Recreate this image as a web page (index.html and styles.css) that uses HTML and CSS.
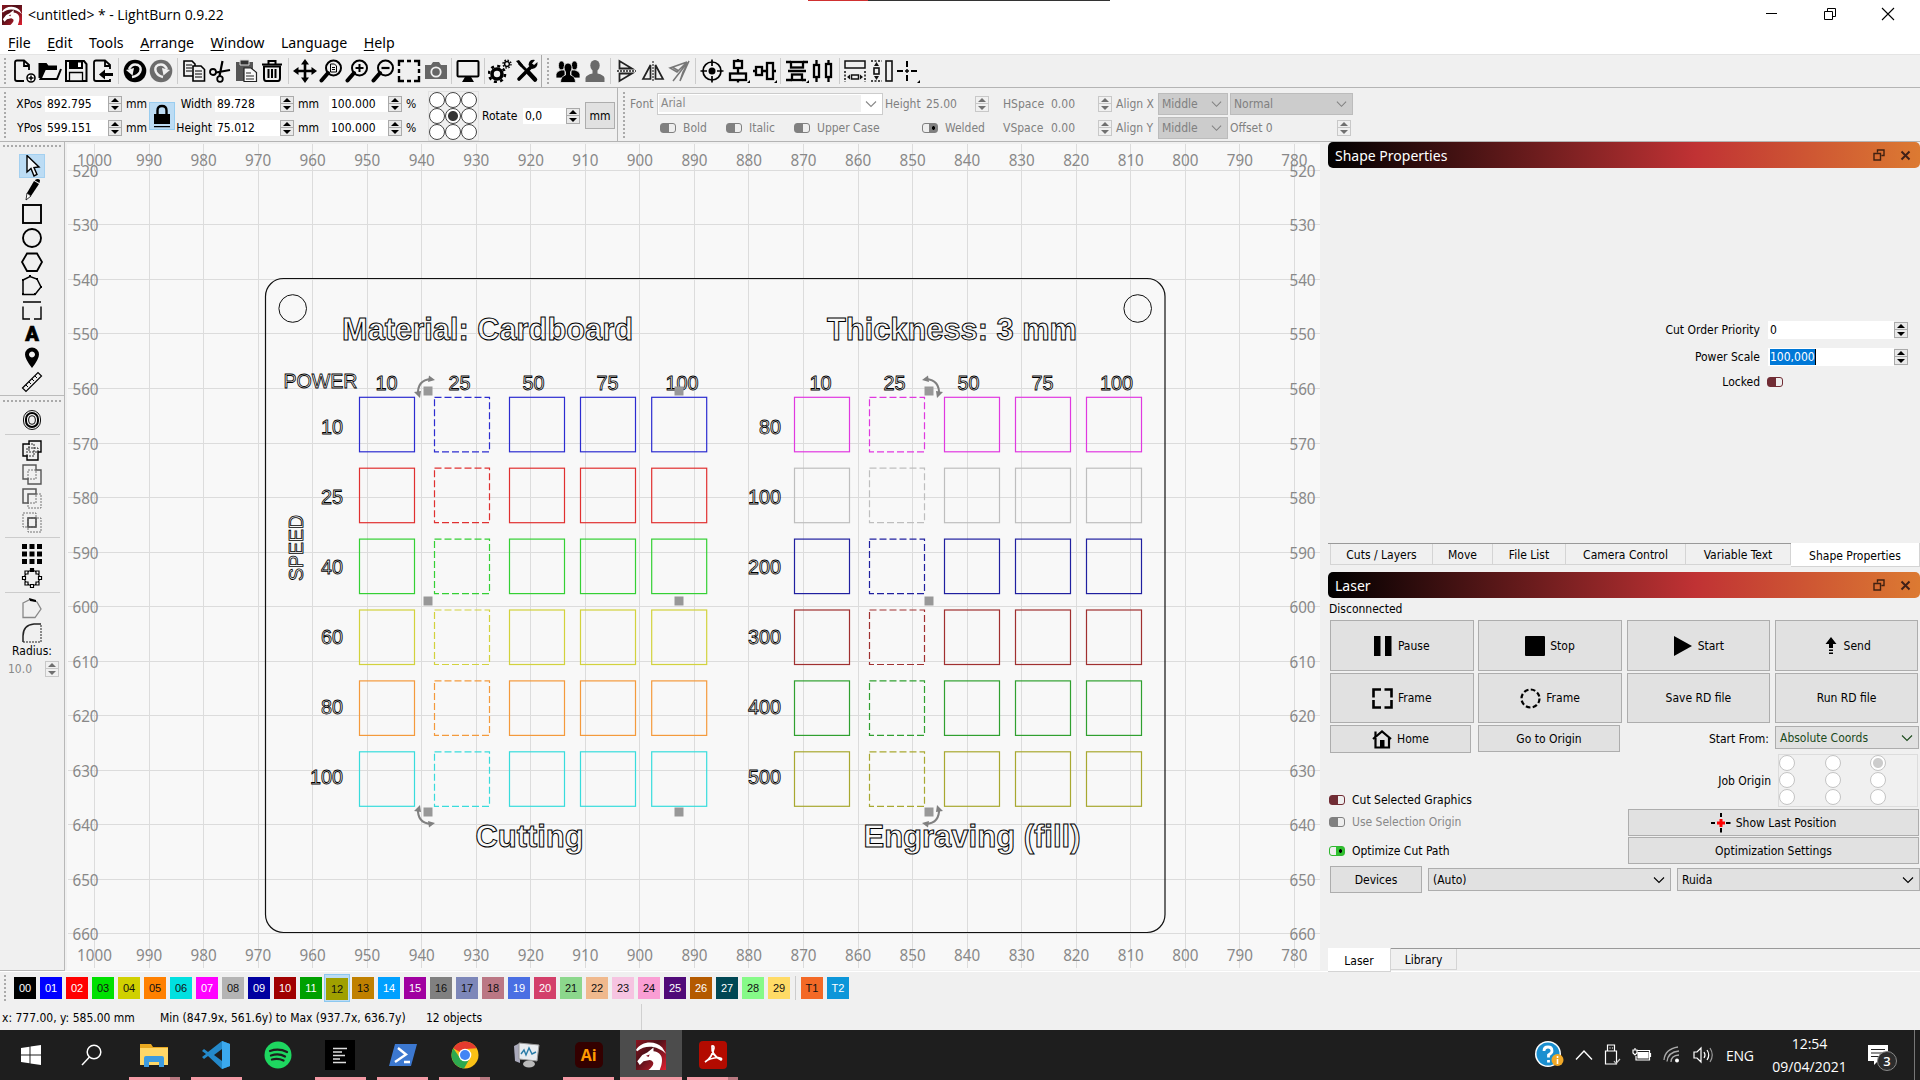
FILE: index.html
```html
<!DOCTYPE html>
<html lang="en">
<head>
<meta charset="utf-8">
<title>LightBurn 0.9.22</title>
<link rel="stylesheet" href="styles.css">
</head>
<body>
<svg class="defs" width="0" height="0">
  <defs>
    <linearGradient id="dragonbg" x1="0" y1="0" x2="1" y2="1"><stop offset="0" stop-color="#8a1420"/><stop offset=".4" stop-color="#4d1018"/><stop offset="1" stop-color="#e02030"/></linearGradient>
    <symbol id="dragon" viewBox="0 0 24 24"><rect width="24" height="24" fill="url(#dragonbg)"/><path d="M0 8C4 1 15 0 21 6L24 11C18 5 8 3 1 9Z" fill="#fff"/><path d="M1 17L5 12L9 10L14 6L14 9C22 10 22 17 19 24H10C15 20 15 17 11 16L6 17L3 20Z" fill="#fff"/><path d="M8 12.500l3-1-1 2z" fill="#801020"/></symbol>
    <symbol id="lens" viewBox="0 0 24 24"><circle cx="14.500" cy="9" r="7.500" fill="none" stroke="#000" stroke-width="2"/><path d="M9 14L2.500 21.500" stroke="#000" stroke-width="4" stroke-linecap="round"/></symbol>
    <symbol id="chev" viewBox="0 0 12 8"><path d="M1 1.500L6 6.500L11 1.500" fill="none" stroke="currentColor" stroke-width="1.100"/></symbol>
  </defs>
</svg>

<header class="titlebar">
  <svg class="applogo" width="20" height="20"><use href="#dragon"/></svg>
  <span class="apptitle">&lt;untitled&gt; * - LightBurn 0.9.22</span>
  <div class="winbuttons">
    <svg width="14" height="14"><path d="M1 6.500H12" stroke="#000"/></svg>
    <svg width="14" height="14"><path d="M1.500 4.500H9.500V12.500H1.500ZM4.500 4V1.500H12.500V9.500H10" fill="none" stroke="#000"/></svg>
    <svg width="14" height="14"><path d="M1 1L13 13M13 1L1 13" stroke="#000" stroke-width="1.100"/></svg>
  </div>
  <div class="topstrip"></div>
</header>

<nav class="menubar">
  <span><u>F</u>ile</span><span><u>E</u>dit</span><span>Tools</span><span><u>A</u>rrange</span><span><u>W</u>indow</span><span>Language</span><span><u>H</u>elp</span>
</nav>

<section class="iconbar">
  <i class="grip"></i>
  <div class="icons main-icons">
    <svg viewBox="0 0 24 24"><path d="M17 11V6L12 1.500H5Q3 1.500 3 3.500V20Q3 22 5 22H12M12 2V7H17" fill="none" stroke="#000" stroke-width="1.800"/><circle cx="19" cy="19" r="4" fill="#fff" stroke="#000" stroke-width="1.600"/><path d="M16.500 19h5M19 16.500v5" stroke="#000" stroke-width="1.500"/></svg>
    <svg viewBox="0 0 24 24"><path d="M1.500 19V5H8L10 7.500H18V10H7L2.500 20H19L23 10" fill="none" stroke="#000" stroke-width="2"/><path d="M2 20L2 5H8L10 7H18V10H7Z"/></svg>
    <svg viewBox="0 0 24 24"><path d="M2 2H20L22.500 5V22H2Z" fill="none" stroke="#000" stroke-width="2"/><path d="M5 2H19V10H5Z"/><path d="M14 3.500h3v4.500h-3z" fill="#fff"/><path d="M5.500 13.500H18.500V22H5.500Z" fill="#f0f0f0" stroke="#000" stroke-width="1.300"/></svg>
    <svg viewBox="0 0 24 24"><path d="M19 10V6L14 1.500H5Q3 1.500 3 3.500V20Q3 22 5 22H19V20M14 2V7H19" fill="none" stroke="#000" stroke-width="1.800"/><path d="M8 15.500L14 10.500V14H22V17H14V20.500Z"/></svg>
    <i class="sep"></i>
    <svg viewBox="0 0 24 24"><circle cx="12" cy="12" r="11.300"/><path d="M6 10Q9 4 15 6Q19 8 17 13Q15 17 9 18" fill="none" stroke="#f0f0f0" stroke-width="2.400"/><path d="M3 11L11 9L9.500 16.500Z" fill="#f0f0f0"/></svg>
    <svg viewBox="0 0 24 24"><circle cx="12" cy="12" r="11.300" fill="#6c6c6c"/><path d="M18 10Q15 4 9 6Q5 8 7 13Q9 17 14 18" fill="none" stroke="#f0f0f0" stroke-width="2.400"/><path d="M21 11L13 9L14.500 16.500Z" fill="#f0f0f0"/></svg>
    <i class="sep"></i>
    <svg viewBox="0 0 24 24"><path d="M2 2H10L13 5V17H2Z" fill="#f0f0f0" stroke="#000" stroke-width="1.600"/><path d="M4 6h6M4 9h6M4 12h6"  stroke="#000"/><path d="M11 7H19L22.500 10.500V22H11Z" fill="#f0f0f0" stroke="#000" stroke-width="1.600"/><path d="M13 12h7M13 15h7M13 18h7" stroke="#000" stroke-width="1.200"/></svg>
    <svg viewBox="0 0 24 24" fill="none" stroke="#000"><circle cx="5" cy="13" r="3" stroke-width="1.800"/><circle cx="12" cy="20" r="2.800" stroke-width="1.800"/><path d="M8 13.500L22 11M11.500 17L14.500 2" stroke-width="2.200"/></svg>
    <svg viewBox="0 0 24 24"><path d="M2 3H19V10H11V22H2Z" fill="#555"/><path d="M6 1h9v5h-9z" fill="#333" stroke="#ddd"/><path d="M10 9H17L22.500 13.500V22.500H10Z" fill="#f8f8f8" stroke="#222" stroke-width="1.200"/><path d="M12 14h5M12 17h8M12 20h8" stroke="#222"/></svg>
    <svg viewBox="0 0 24 24" fill="none" stroke="#000"><path d="M4 7.500H20V19Q20 22 18 22H6Q4 22 4 19Z" stroke-width="2"/><path d="M2 5.500H22M8.500 4.500V2H15.500V4.500" stroke-width="2"/><path d="M8.500 10v9M12 10v9M15.500 10v9" stroke-width="2"/></svg>
    <i class="sep"></i>
    <svg viewBox="0 0 24 24"><path d="M12 4V20M4 12H20" stroke="#000" stroke-width="2.600"/><path d="M12 0L16 5.500H8ZM12 24L8 18.500H16ZM0 12L5.500 8V16ZM24 12L18.500 16V8Z"/></svg>
    <svg viewBox="0 0 24 24"><use href="#lens"/><path d="M11.500 5H15.500L17.500 7V13H11.500Z" fill="none" stroke="#000"/><path d="M13 8.500h3M13 10.500h3" stroke="#000"/></svg>
    <svg viewBox="0 0 24 24"><use href="#lens"/><path d="M10.500 9h8M14.500 5v8" stroke="#000" stroke-width="2"/></svg>
    <svg viewBox="0 0 24 24"><use href="#lens"/><path d="M10.500 9h8" stroke="#000" stroke-width="2.200"/></svg>
    <svg viewBox="0 0 24 24"><path d="M2 7V2H7M10 2H14M17 2H22V7M22 10V14M22 17V22H17M14 22H10M7 22H2V17M2 14V10" fill="none" stroke="#000" stroke-width="2.400"/></svg>
    <svg viewBox="0 0 24 24"><path d="M1 6H7L9 3H15L17 6H23V20H1Z" fill="#666"/><circle cx="12" cy="13" r="4.700" fill="none" stroke="#f0f0f0" stroke-width="1.800"/></svg>
    <i class="sep"></i>
    <svg viewBox="0 0 24 24"><rect x="1.500" y="2" width="21" height="15.500" rx="1" fill="none" stroke="#000" stroke-width="2"/><path d="M9 18H15L18 23H6Z"/></svg>
    <i class="sep"></i>
    <svg viewBox="0 0 24 24" fill="none" stroke="#000"><circle cx="9" cy="15" r="5" stroke-width="3.600"/><circle cx="9" cy="15" r="8" stroke-width="2.600" stroke-dasharray="3 3.280"/><circle cx="19" cy="5" r="2.400" stroke-width="1.500"/><circle cx="19" cy="5" r="4" stroke-width="1.300" stroke-dasharray="1.600 1.540"/></svg>
    <svg viewBox="0 0 24 24"><path d="M4 4L20 20" stroke="#000" stroke-width="2.800"/><path d="M13.500 13.500L20 20.500" stroke="#000" stroke-width="4.500" stroke-linecap="round"/><path d="M17 7L4 20" stroke="#000" stroke-width="3.600" stroke-linecap="round"/><path d="M22.500 3L19 6L17 4.500L20 1Q14 0 13.500 6L17 10Q23 9 22.500 3ZM1 2L4 1L8 6L6 8Z"/></svg>
  </div>
  <i class="barend"></i>
  <i class="grip"></i>
  <div class="icons arrange-icons">
    <svg viewBox="0 0 24 24"><g fill="#000" stroke="#f0f0f0" stroke-width=".8"><ellipse cx="5.500" cy="6.500" rx="3" ry="4.500"/><ellipse cx="18.500" cy="6.500" rx="3" ry="4.500"/><path d="M0 19V15Q1 12 5 11H9V19ZM24 19V15Q23 12 19 11H15V19Z"/><path d="M4.500 23.500Q4.500 17.500 9.500 16V13Q8 11 8 8Q8.500 4 12 4T16 8Q16 11 14.500 13V16Q19.500 17.500 19.500 23.500Z"/></g></svg>
    <svg viewBox="0 0 24 24"><ellipse cx="12" cy="6.500" rx="4.700" ry="5.500" fill="#6a6a6a"/><path d="M2.500 23V19Q3 16 9.500 14.500V11h5V14.500Q21 16 21.500 19V23Z" fill="#6a6a6a"/></svg>
    <i class="sep"></i>
    <svg viewBox="0 0 24 24" fill="none" stroke="#222" stroke-width="1.800"><path d="M4.500 2V9.500H17ZM4.500 22V14.500H17Z"/><path d="M2 12H21" stroke-dasharray="2 1" stroke-width="1.500"/></svg>
    <svg viewBox="0 0 24 24" fill="none" stroke="#222" stroke-width="1.700"><path d="M2 20H9.500V6ZM22 20H14.500V6Z"/><path d="M12 2V22" stroke-dasharray="2 1" stroke="#666"/></svg>
    <svg viewBox="0 0 24 24" fill="none" stroke="#777" stroke-width="1.500"><path d="M2 9L19 3L9 13ZM12 22L21 2L15 13ZM5 22L19 4M5 8.500l5 3"/></svg>
    <i class="sep"></i>
    <svg viewBox="0 0 24 24" fill="none" stroke="#000" stroke-width="1.700"><circle cx="12" cy="12" r="9"/><path d="M12 .5V7M12 17V23.500M.5 12H7M17 12H23.500"/><circle cx="12" cy="12" r="3.500" fill="#000" stroke="none"/></svg>
    <svg viewBox="0 0 24 24" fill="none" stroke="#000" stroke-width="2.300"><rect x="8" y="2" width="8" height="7"/><rect x="4" y="14.500" width="16" height="6.500"/><path d="M12 8V15M12 21v2.500M12 0v2"/><path d="M24 24h-3l3-3z" fill="#000" stroke="none"/></svg>
    <svg viewBox="0 0 24 24" fill="none" stroke="#000" stroke-width="2.300"><rect x="3" y="8" width="6" height="8"/><rect x="14" y="4" width="6" height="16"/><path d="M9 12H14M20 12h3M0 12h3"/><path d="M24 24h-3l3-3z" fill="#000" stroke="none"/></svg>
    <i class="sep"></i>
    <svg viewBox="0 0 24 24" fill="none" stroke="#000" stroke-width="2.300"><rect x="6" y="3" width="12" height="5.500"/><rect x="7" y="15.500" width="10" height="5.500"/><path d="M1 3H6M18 3h5M3 12H21M1 21H7M17 21H21"/><path d="M24 24h-3l3-3z" fill="#000" stroke="none"/></svg>
    <svg viewBox="0 0 24 24" fill="none" stroke="#000" stroke-width="2.300"><rect x="3" y="6" width="5" height="12"/><rect x="15" y="5" width="5" height="13"/><path d="M5.500 1V6M5.500 18V23M17.500 1v4M17.500 18v5"/></svg>
    <i class="sep"></i>
    <svg viewBox="0 0 24 24" fill="none" stroke="#111" stroke-width="1.500"><rect x="2" y="2" width="20" height="7"/><path d="M2 12V23M22 12V23" stroke-dasharray="2 1.500"/><rect x="8.500" y="16" width="7" height="4"/><path d="M4 18L7 15.500V20.500ZM20 18L17 15.500V20.500Z" fill="#111" stroke="none"/></svg>
    <svg viewBox="0 0 24 24" fill="none" stroke="#111" stroke-width="1.600"><rect x="16" y="2" width="6" height="20"/><path d="M1 2H12M1 22H12" stroke-dasharray="2 1.500"/><rect x="4" y="9" width="5" height="6"/><path d="M6.500 3L9 7H4ZM6.500 21L9 17H4Z" fill="#111" stroke="none"/></svg>
    <svg viewBox="0 0 24 24" fill="none" stroke="#000" stroke-width="2"><path d="M11 2V8M11 16V22M1 12H7M15 12H21"/><path d="M11 10v4M9 12h4" stroke-width="1.400"/><path d="M24 24h-3l3-3z" fill="#000" stroke="none"/></svg>
  </div>
</section>

<section class="propbar">
  <div class="xform">
    <i class="grip tall"></i>
    <div class="xy">
      <label>XPos</label><b class="field">892.795</b><i class="spin"></i><span>mm</span>
      <label>YPos</label><b class="field">599.151</b><i class="spin"></i><span>mm</span>
    </div>
    <div class="lock"><svg width="18" height="24"><path d="M4.500 10V6.500Q4.500 2 9 2T13.500 6.500V10" fill="none" stroke="#000" stroke-width="2.400"/><path d="M1 10H17V20H1ZM1 22h16v1.200H1Z"/></svg></div>
    <div class="wh">
      <label>Width</label><b class="field">89.728</b><i class="spin"></i><span>mm</span><b class="field">100.000</b><i class="spin"></i><span>%</span>
      <label>Height</label><b class="field">75.012</b><i class="spin"></i><span>mm</span><b class="field">100.000</b><i class="spin"></i><span>%</span>
    </div>
    <div class="anchors"><i></i><i></i><i></i><i></i><i class="on"></i><i></i><i></i><i></i><i></i></div>
    <label class="rotlabel">Rotate</label><b class="field rotfield">0,0</b><i class="spin"></i>
    <div class="unit">mm</div>
  </div>
  <div class="fontbar">
    <i class="grip tall"></i>
    <div class="fontcols">
      <div class="frow top">
        <span>Font</span><div class="fontbox"><em>Arial</em><svg width="12" height="8"><use href="#chev"/></svg></div>
        <span>Height</span><span>25.00</span><i class="spin"></i><span>HSpace</span><span>0.00</span><i class="spin"></i><span>Align X</span>
        <div class="gcombo">Middle<svg width="11" height="8"><use href="#chev"/></svg></div><div class="gcombo">Normal<svg width="11" height="8"><use href="#chev"/></svg></div>
      </div>
      <div class="frow bottom">
        <i class="toggle"></i><span>Bold</span><i class="toggle"></i><span>Italic</span><i class="toggle"></i><span>Upper Case</span><i class="toggle right"></i><span>Welded</span><span>VSpace</span><span>0.00</span><i class="spin"></i><span>Align Y</span>
        <div class="gcombo">Middle<svg width="11" height="8"><use href="#chev"/></svg></div><span>Offset 0</span><i class="spin"></i>
      </div>
    </div>
  </div>
</section>

<main class="work">
  <aside class="tools">
    <i class="hgrip"></i>
    <div class="toolset">
      <div class="tool active"><svg viewBox="0 0 24 24"><path d="M7 1.500V18L11 14.500L14 22L17 20.500L14 13.500L19 13Z" fill="#f4f8fc" stroke="#000" stroke-width="1.400"/></svg></div>
      <div class="tool"><svg viewBox="0 0 24 24"><path d="M14 3L19 6L11 18L7 15Z"/><path d="M15 2Q18 0 20 2L19.500 5L15 2.500Z"/><path d="M7 15L11 18L6 22Z" fill="#fff" stroke="#000" stroke-width=".8"/></svg></div>
      <div class="tool"><svg viewBox="0 0 24 24"><rect x="3" y="3" width="18" height="18" fill="none" stroke="#000" stroke-width="1.900"/></svg></div>
      <div class="tool"><svg viewBox="0 0 24 24"><circle cx="12" cy="12" r="9" fill="none" stroke="#000" stroke-width="1.900"/></svg></div>
      <div class="tool"><svg viewBox="0 0 24 24"><path d="M7 3.500H17L22 12L17 21H7L2 12Z" fill="none" stroke="#000" stroke-width="1.800"/></svg></div>
      <div class="tool"><svg viewBox="0 0 24 24"><path d="M3 6L10 2.500L17 5L21 13L15 20.500H3Z" fill="none" stroke="#000" stroke-width="1.500"/><path d="M2 5h2v2H2zM9 1h2v2H9zM16 4h2v2h-2zM20 12h2v2h-2zM14 19h2v2h-2zM2 19h2v2H2z"/></svg></div>
      <div class="tool"><svg viewBox="0 0 24 24"><path d="M3 4H21M3 8.500V21H10M14 21H21V8.500" fill="none" stroke="#000" stroke-width="1.400"/></svg></div>
      <div class="tool letter">A</div>
      <div class="tool"><svg viewBox="0 0 24 24"><path fill-rule="evenodd" d="M12 22Q5 13 5 8.500A7 7 0 0 1 19 8.500Q19 13 12 22ZM12 5.500a3 3 0 1 0 .01 0Z"/></svg></div>
      <div class="tool"><svg viewBox="0 0 24 24"><path d="M2.500 18L18 2.500L21.500 6L6 21.500Z" fill="none" stroke="#000" stroke-width="1.200"/><path d="M6 15l2 2M9 12l2 2M12 9l2 2M15 6l2 2" stroke="#000"/></svg></div>
    </div>
    <i class="hline"></i><i class="hgrip"></i>
    <div class="tool ring"><svg viewBox="0 0 24 24" fill="none"><rect x="3.500" y="2.500" width="17" height="19" rx="8.500" stroke="#111"/><rect x="6" y="5" width="12" height="14" rx="6" stroke="#000" stroke-width="2"/><rect x="8.700" y="7.700" width="6.600" height="8.600" rx="3.300" stroke="#111"/></svg></div>
    <i class="hsep"></i>
    <div class="toolset">
      <div class="tool"><svg viewBox="0 0 24 24" fill="none" stroke="#000" stroke-width="1.400"><path d="M3 5H9V2H21V13H18V21H7V17H3Z"/><path d="M7 17V9H18V13H9V5H14V17Z" stroke-width=".8" stroke-dasharray="2 1"/></svg></div>
      <div class="tool"><svg viewBox="0 0 24 24" fill="none" stroke="#555" stroke-width="1.400"><path d="M3 2H16V7H21V21H8V16H3Z"/><path d="M8 16V7H16V16Z" stroke-width=".8" stroke-dasharray="2 1"/></svg></div>
      <div class="tool"><svg viewBox="0 0 24 24" fill="none" stroke="#555" stroke-width="1.500"><path d="M3 2H16V7H8V16H3Z"/><path d="M16 7H21V21H8V16H16Z" stroke-width=".8" stroke-dasharray="2 1"/></svg></div>
      <div class="tool"><svg viewBox="0 0 24 24" fill="none" stroke="#555"><path d="M3 2H16V16H3ZM8 7H21V21H8Z" stroke-width=".8" stroke-dasharray="2 1"/><rect x="8" y="7" width="8" height="9" stroke-width="1.700"/></svg></div>
    </div>
    <i class="hsep"></i>
    <div class="toolset">
      <div class="tool"><svg viewBox="0 0 24 24"><path d="M2 2h5v5H2zM9.500 2h5v5h-5zM17 2h5v5h-5zM2 9.500h5v5H2zM9.500 9.500h5v5h-5zM17 9.500h5v5h-5zM2 17h5v5H2zM9.500 17h5v5h-5zM17 17h5v5h-5z"/></svg></div>
      <div class="tool"><svg viewBox="0 0 24 24" fill="#fff" stroke="#000" stroke-width="1.200"><circle cx="12" cy="12" r="7.500" fill="none"/><path d="M10.500 18.500h3v3h-3zM2.500 10.500h3v3h-3zM18.500 10.500h3v3h-3zM5 5h3v3H5zM16 5h3v3h-3zM5 16h3v3H5zM16 16h3v3h-3z"/><path d="M10.500 2.500h3v3h-3z" fill="#000"/></svg></div>
    </div>
    <i class="hsep"></i>
    <div class="toolset">
      <div class="tool"><svg viewBox="0 0 24 24"><path d="M3 6L10 2.500L17 5L21 12L15 20.500H3Z" fill="none" stroke="#888" stroke-width="1.300"/><path d="M9 1L16 3V5L10 4Z"/></svg></div>
      <div class="tool"><svg viewBox="0 0 24 24" fill="none" stroke="#222" stroke-width="1.500"><path d="M3 21V15Q3 4 14 3H21"/><path d="M21 4V21H3" stroke-width="1" stroke-dasharray="2 1"/></svg></div>
    </div>
    <div class="radius">Radius:</div>
    <div class="radiusval"><span>10.0</span><i class="spin dim"></i></div>
  </aside>
  <svg class="canvas" id="canvas" width="1253" height="826" viewBox="67 144 1253 826"></svg>

  <aside class="panels">
    <div class="dockbar"><span>Shape Properties</span><svg width="12" height="12"><path d="M4.500 3.500V1H11V6.500H8.500M1 4.500H7.500V11H1Z" fill="none" stroke="#402010" stroke-width="1.400"/></svg><svg width="11" height="11"><path d="M1.500 1.500L9.500 9.500M9.500 1.500L1.500 9.500" stroke="#402018" stroke-width="2"/></svg></div>
    <div class="shape">
      <label>Cut Order Priority</label><b class="field">0</b><i class="spin"></i>
      <label>Power Scale</label><b class="field"><mark>100,000</mark></b><i class="spin"></i>
      <label>Locked</label><i class="toggle red"></i>
    </div>
    <div class="tabs upper"><span>Cuts / Layers</span><span>Move</span><span>File List</span><span>Camera Control</span><span>Variable Text</span><span class="sel">Shape Properties</span></div>
    <div class="dockbar"><span>Laser</span><svg width="12" height="12"><path d="M4.500 3.500V1H11V6.500H8.500M1 4.500H7.500V11H1Z" fill="none" stroke="#402010" stroke-width="1.400"/></svg><svg width="11" height="11"><path d="M1.500 1.500L9.500 9.500M9.500 1.500L1.500 9.500" stroke="#402018" stroke-width="2"/></svg></div>
    <div class="status">Disconnected</div>
    <div class="bigbuttons">
      <div class="btn"><svg width="19" height="20"><path d="M0 0h6.500v20H0zM11 0h6.500v20H11z"/></svg>Pause</div>
      <div class="btn"><svg width="20" height="20"><rect width="20" height="20" rx="1"/></svg>Stop</div>
      <div class="btn"><svg width="20" height="20"><path d="M1 0L19 10L1 20Z"/></svg>Start</div>
      <div class="btn"><svg width="16" height="18"><path d="M8 0L13.500 7H10V11H6V7H2.500ZM6 12.500h4v1.500H6zM6 15.500h4v1.500H6z"/></svg>Send</div>
      <div class="btn"><svg width="21" height="21"><path d="M1.500 7V1.500H9M12.500 1.500H19.500V7M19.500 14V19.500H12.500M9 19.500H1.500V14M1.500 7v2.500M19.500 7v2.500M1.500 12v3M19.500 12v3" fill="none" stroke="#000" stroke-width="2.600"/></svg>Frame</div>
      <div class="btn"><svg width="21" height="21"><circle cx="10.500" cy="10.500" r="9" fill="none" stroke="#000" stroke-width="2.200" stroke-dasharray="4.700 2.370"/></svg>Frame</div>
      <div class="btn">Save RD file</div><div class="btn">Run RD file</div>
    </div>
    <div class="homerow">
      <div class="btn home"><svg width="20" height="19"><path d="M1 9L10 1.500L19 9" fill="none" stroke="#000" stroke-width="2.200"/><path d="M3.500 8V17.500H17V8M3.500 1.500V7" fill="none" stroke="#000" stroke-width="2.200"/><path d="M8 10h4.500v8H8z"/></svg>Home</div>
      <div class="btn goto">Go to Origin</div>
      <label>Start From:</label>
      <div class="combo green">Absolute Coords<svg width="12" height="8"><use href="#chev"/></svg></div>
    </div>
    <div class="lower">
      <div class="opts">
        <div><i class="toggle red"></i>Cut Selected Graphics</div>
        <div class="dimtext"><i class="toggle"></i>Use Selection Origin</div>
        <div><i class="toggle on"></i>Optimize Cut Path</div>
      </div>
      <div class="origin">
        <div class="job"><label>Job Origin</label><div class="radios"><i></i><i></i><i class="on"></i><i></i><i></i><i></i><i></i><i></i><i></i></div></div>
        <div class="btn show"><svg width="20" height="20"><path d="M10 0v4M10 15v4.500M0 10h4M15 10h4.500" stroke="#000" stroke-width="2"/><path d="M10 6v8M6 10h8" stroke="#f00" stroke-width="3"/></svg>Show Last Position</div>
        <div class="btn settings">Optimization Settings</div>
      </div>
    </div>
    <div class="devrow">
      <div class="btn">Devices</div><div class="combo">(Auto)<svg width="12" height="8"><use href="#chev"/></svg></div><div class="combo">Ruida<svg width="12" height="8"><use href="#chev"/></svg></div>
    </div>
    <div class="tabs bottomtabs"><span class="sel">Laser</span><span>Library</span></div>
  </aside>
</main>

<section class="palette"><i class="grip"></i><div class="swatches" id="swatches"></div></section>
<section class="statusbar"><span class="s1">x: 777.00, y: 585.00 mm</span><span class="s2">Min (847.9x, 561.6y) to Max (937.7x, 636.7y)</span><span class="s3">12 objects</span></section>

<footer class="taskbar">
  <div class="task"><svg width="24" height="24"><path d="M2 5L10.500 3.700V11.500H2ZM11.500 3.500L22 2V11.500H11.500ZM2 12.500H10.500V20.300L2 19ZM11.500 12.500H22V22L11.500 20.500Z" fill="#fff"/></svg></div>
  <div class="task"><svg width="24" height="24" fill="none" stroke="#fff" stroke-width="1.500"><circle cx="14" cy="9" r="6.800"/><path d="M9.500 14L2 22"/></svg></div>
  <div class="task run multi"><svg width="30" height="28"><path d="M1 3H12L14 6H29V24H1Z" fill="#e9a820"/><path d="M1 7H29V24H1Z" fill="#ffd767"/><path d="M5 26V17Q5 15 7 15H23Q25 15 25 17V26H20V21H10V26Z" fill="#3d9be0"/></svg></div>
  <div class="task run"><svg width="32" height="30"><path d="M22 1L30 4V26L22 29L8 16L4 19L2 17L6 14L2 11L4 9L8 12Z" fill="#2489ca"/><path d="M22 1L30 4V26L22 29Z" fill="#3ba9ee"/><path d="M22 9V21L14 15Z" fill="#1e1e1e"/></svg></div>
  <div class="task"><svg width="28" height="28"><circle cx="14" cy="14" r="13.500" fill="#1ed760"/><path d="M6 10Q15 7 23 11M7 14.500Q15 12 21 15.500M8 18.500Q14 17 19.500 19.500" fill="none" stroke="#1e1e1e" stroke-width="2.300" stroke-linecap="round"/></svg></div>
  <div class="task run"><svg width="30" height="30"><rect width="30" height="30" fill="#000"/><path d="M8 8.500h14M8 12h9M8 15.500h12M8 19h7M8 22.500h13" stroke="#ddd" stroke-width="1.300"/></svg></div>
  <div class="task run"><svg width="30" height="26"><path d="M7 2H29L23 24H1Z" fill="#3c78d0"/><path d="M10 6L18 12.500L7 20M16 20H22" fill="none" stroke="#fff" stroke-width="2.400"/></svg></div>
  <div class="task run multi"><svg width="28" height="28"><circle cx="14" cy="14" r="13.500" fill="#fbc116"/><path d="M14 14L2.300 7.300A13.500 13.500 0 0 1 25.700 7.300L14 8Z" fill="#e33b2e"/><path d="M2.300 7.300A13.500 13.500 0 0 0 13 27.500L19 17L9 17Z" fill="#2da94f"/><circle cx="14" cy="14" r="6.300" fill="#fff"/><circle cx="14" cy="14" r="5" fill="#4285f4"/></svg></div>
  <div class="task"><svg width="30" height="28"><path d="M2 5L8 2V22L3 20Z" fill="#aab"/><path d="M7 2L27 4L25 20L7 18Z" fill="#e8ecf0" stroke="#999"/><path d="M9 13L12 9L14 14L17 7L20 13L24 11" fill="none" stroke="#2a7ca8" stroke-width="1.400"/><ellipse cx="17" cy="23" rx="6" ry="3.500" fill="#bbb"/></svg></div>
  <div class="task run"><div class="ai">Ai</div></div>
  <div class="task run current"><svg width="30" height="30"><use href="#dragon"/></svg></div>
  <div class="task run multi"><svg width="28" height="28"><rect width="28" height="28" rx="4" fill="#b30b00"/><path d="M6 21Q13 17 15 7Q15 4 13 5Q12 14 22 19Q24 17 19 16.500Q11 17 6 21Z" fill="none" stroke="#fff" stroke-width="1.700"/></svg></div>
  <div class="tray">
    <svg width="30" height="30"><circle cx="14" cy="14" r="13" fill="#fff"/><circle cx="14" cy="14" r="11.500" fill="#1a8fd0"/><path d="M10 11Q10 7 14 7T18 11Q18 13 14.500 15V17.500M14.500 20v2.500" fill="none" stroke="#fff" stroke-width="2.800"/><circle cx="23.500" cy="20" r="6" fill="#f0a828"/><path d="M23.500 16v2M23.500 19v5" stroke="#fff" stroke-width="1.600"/></svg>
    <svg width="18" height="12"><path d="M1 10.500L9 2L17 10.500" fill="none" stroke="#fff" stroke-width="1.400"/></svg>
    <svg width="17" height="22" fill="none" stroke="#fff" stroke-width="1.200"><path d="M3.500 7V1H10.500V7M1.500 7H12.500V20H1.500ZM6 3.500v1M8.500 3.500v1"/><path d="M10 17L12 19.500L16 15" stroke="#ccc"/></svg>
    <svg width="20" height="16" fill="none" stroke="#fff" stroke-width="1.200"><path d="M5 3.500H17.500V13H4V9M18.500 6v4M3 1v2M1 3h4v3L3 8L1 6Z"/><path d="M6 5.500H16V11H6Z" fill="#fff"/></svg>
    <svg width="18" height="18" fill="none" stroke="#aaa" stroke-width="1.300"><path d="M1 14Q2 3 15 1M4 15.500Q5 6 16 5M8 16Q8 9.500 16 9"/><circle cx="14" cy="14.500" r="2" fill="#fff" stroke="none"/></svg>
    <svg width="21" height="18" fill="none" stroke="#fff" stroke-width="1.200"><path d="M1 6H4L8 2V16L4 12H1ZM11 6Q13 9 11 12M14 4Q17.500 9 14 14"/><path d="M17 2Q21.500 9 17 16" stroke="#999"/></svg>
    <span class="lang">ENG</span>
    <div class="clock"><span>12:54</span><span>09/04/2021</span></div>
    <div class="notif"><svg width="22" height="22"><path d="M1 1H21V17H11L7 21V17H1Z" fill="#fff"/><path d="M4 5.500h14M4 9h14M4 12.500h9" stroke="#222" stroke-width="1.200"/></svg><b>3</b></div>
  </div>
</footer>
<script src="app.js"></script>
</body>
</html>
```
FILE: styles.css
```css
* { box-sizing: border-box; }
body { margin: 0; width: 1920px; height: 1080px; overflow: hidden; background: #f0f0f0; color: #000; font: 12px "DejaVu Sans", "Noto Sans", sans-serif; font-stretch: condensed; white-space: nowrap; display: flex; flex-direction: column; }
svg { display: block; flex: none; }
i, b, em { font-style: normal; font-weight: normal; flex: none; }
.defs { position: absolute; }

.titlebar { height: 29px; flex: none; background: #fff; display: flex; align-items: center; padding: 0 25px 0 2px; position: relative; }
.apptitle { font: 14px "Open Sans", sans-serif; letter-spacing: -.03px; margin-left: 6px; margin-top: -1px; }
.winbuttons { display: flex; gap: 44px; margin-left: auto; margin-top: -1px; }
.topstrip { position: absolute; left: 808px; top: 0; width: 302px; height: 1px; background: linear-gradient(90deg, #d03030 60px, #333 60px); }

.menubar { height: 26px; flex: none; background: #fff; border-bottom: 1px solid #e4e4e4; display: flex; padding: 2px 8px 0; gap: 16.500px; align-items: center; font: 14.200px "Noto Sans", sans-serif; }
.menubar u { text-underline-offset: 2px; }

.grip { width: 3px; height: 26px; background: radial-gradient(circle at 1px 1px, #aaa 1px, transparent 1.300px) 0 0 / 3px 4px; }
.grip.tall { height: 47px; }
.iconbar { height: 33px; flex: none; border-bottom: 1px solid #b4b4b4; display: flex; align-items: center; padding-left: 4px; }
.icons { display: flex; align-items: center; justify-content: space-between; }
.icons svg { width: 24px; height: 24px; }
.icons .sep { width: 1px; height: 26px; background: #ccc; }
.main-icons { margin-left: 5px; width: 527px; }
.main-icons .sep { margin: 0 1.500px; }
.barend { width: 1px; height: 32px; background: #aaa; margin: 0 5px 0 2px; }
.arrange-icons { margin-left: 6px; width: 364px; }
.arrange-icons .sep { margin: 0 1px; }

.propbar { height: 54px; flex: none; border-bottom: 1px solid #b4b4b4; display: flex; }
.xform { width: 618px; border-right: 1px solid #b4b4b4; display: flex; align-items: center; padding: 2px 0 0 4px; }
.field { background: #fff; height: 16px; line-height: 16px; padding-left: 2px; }
.spin { width: 14px; height: 16px; border: 1px solid #aaa; background: linear-gradient(#e9e9e9 6px, #aaa 6px, #aaa 7px, #e9e9e9 7px); display: flex; flex-direction: column; align-items: center; justify-content: space-between; padding: 1px 0; color: #000; }
.spin::before, .spin::after { content: ""; border: 4px solid transparent; border-top-width: 0; border-bottom: 4px solid currentColor; }
.spin::after { border-top: 4px solid currentColor; border-bottom-width: 0; }
.spin.dim, .fontbar .spin { color: #707070; border-color: #c8c8c8; background: linear-gradient(#f0f0f0 6px, #c8c8c8 6px, #c8c8c8 7px, #f0f0f0 7px); }
.xy { display: grid; grid-template-columns: 34px 63px 14px 27px; grid-template-rows: 16px 16px; row-gap: 8px; align-items: center; margin-left: 4px; }
.xy label, .wh label { text-align: right; padding-right: 3px; }
.xy span, .wh span { padding-left: 4px; }
.lock { width: 26px; height: 28px; background: #bcdcf4; border: 1px solid #99cdf0; display: flex; align-items: center; justify-content: center; }
.wh { display: grid; grid-template-columns: 41px 65px 14px 35px 59px 14px 26px; grid-template-rows: 16px 16px; row-gap: 8px; align-items: center; margin-left: -1px; }
.anchors { display: grid; grid-template-columns: repeat(3, 16px); margin-left: 1px; width: 49px; outline: 1px solid #e2e2e2; }
.anchors i { width: 16px; height: 16px; border: 1px solid #444; border-radius: 50%; background: #fff; }
.anchors .on { background: radial-gradient(#333 4.500px, #fff 5.500px); }
.rotlabel { width: 41px; margin-left: 4px; }
.rotfield { width: 43px; }
.unit { width: 30px; height: 27px; margin-left: 5px; background: #e1e1e1; border: 1px solid #adadad; display: flex; align-items: center; justify-content: center; }

.fontbar { display: flex; align-items: center; padding: 2px 0 0 5px; color: #808080; }
.fontcols { margin-left: 4px; }
.frow { display: grid; align-items: center; height: 24px; }
.frow.top { grid-template-columns: 27px 228px 41px 49px 28px 48px 47px 18px 42px 72px 123px; }
.frow.bottom { grid-template-columns: 23px 43px 23px 45px 23px 105px 23px 58px 48px 47px 18px 42px 72px 107px 14px; padding-left: 30px; }
.fontbox { width: 226px; height: 22px; border: 1px solid #ccc; background: #fff; display: flex; align-items: center; justify-content: space-between; padding: 1px 5px 1px 1px; color: #888; }
.fontbox em { width: 202px; background: #f0f0f0; height: 17px; line-height: 17px; padding-left: 2px; }
.gcombo { height: 22px; background: #ccc; border: 1px solid #bcbcbc; display: flex; align-items: center; justify-content: space-between; padding: 0 5px 0 3px; margin-right: 2px; }
.top .gcombo:last-child { margin-right: 0; }
.toggle { display: block; width: 16px; height: 10px; border: 1px solid #808080; border-radius: 3px; background: linear-gradient(90deg, #808080 8px, #eee 8px); }
.toggle.right { background: radial-gradient(circle at 10.500px 4px, #000 1.500px, transparent 2px), linear-gradient(90deg, #eee 6px, #808080 6px); }
.toggle.red { border-color: #702c34; background: linear-gradient(90deg, #702c34 8px, #eee 8px); }
.toggle.on { border-color: #30b830; background: radial-gradient(circle at 10.500px 4px, #000 1.500px, transparent 2px), linear-gradient(90deg, #eee 6px, #30c030 6px); }

.work { height: 830px; flex: none; display: flex; align-items: flex-start; border-bottom: 1px solid #fff; }
.tools { width: 65px; height: 829px; border: solid #b8b8b8; border-width: 0 1px 1px 0; display: flex; flex-direction: column; align-items: center; padding-top: 3px; margin-right: 2px; }
.hgrip { width: 58px; height: 3px; background: radial-gradient(circle at 1px 1px, #aaa 1px, transparent 1.300px) 0 0 / 4px 3px; }
.hgrip + .toolset { margin-top: 6px; }
.tool { width: 26px; height: 24px; display: flex; align-items: center; justify-content: center; }
.tool svg { width: 24px; height: 24px; }
.tool.active { background: #bcdcf4; outline: 1px solid #a4d0f0; outline-offset: -1px; }
.tool.letter { font: 900 20px Roboto, sans-serif; -webkit-text-stroke: .7px #000; }
.tool.ring { margin: 5px 0 0; }
.hline { align-self: stretch; height: 1px; background: #bbb; margin: 1px 0 4px; }
.hsep { width: 55px; height: 1px; background: #ccc; margin: 2px 0 4px; }
.radius { margin-top: -1px; }
.radiusval { display: flex; width: 51px; justify-content: space-between; align-items: center; color: #888; margin: 3px -3px 0 0; }
.canvas { margin-top: 2px; background: #f8f8f8; }
.canvas text { font-family: "Noto Sans", sans-serif; font-size: 17px; fill: #888; font-stretch: normal; }
.canvas .outline { font-family: "Liberation Sans", sans-serif; fill: none; stroke: #000; stroke-width: 1px; }
.canvas .big { font-size: 31px; font-weight: bold; }
.canvas .small { font-size: 20.500px; stroke-width: .85px; }

.panels { width: 592px; height: 829px; margin-left: 8px; display: flex; flex-direction: column; }
.dockbar { height: 26px; flex: none; border-radius: 5px; background: linear-gradient(90deg, #000, #c03234 62%, #dc7a32); color: #fff; display: flex; align-items: center; padding: 0 9px 0 7px; font: 14px "Noto Sans", sans-serif; }
.dockbar span { margin-right: auto; }
.dockbar svg + svg { margin-left: 15px; }
.shape { height: 375px; padding: 153px 12px 0 0; display: grid; grid-template-columns: 432px 8px 126px 14px; grid-template-rows: 18px 18px 18px; row-gap: 9px; align-items: center; align-content: start; }
.shape label { grid-column: 1; text-align: right; }
.shape .field { grid-column: 3; height: 18px; line-height: 18px; }
.shape .spin { grid-column: 4; }
.shape .toggle { grid-column: 3; margin-top: -4px; margin-left: -1px; }
.shape label:nth-last-child(2) { margin-top: -4px; }
.shape mark { background: #0078d7; color: #fff; border-right: 1px solid #000; display: inline-block; height: 16px; line-height: 16px; }
.tabs { display: flex; border-top: 1px solid #999; height: 29px; flex: none; align-items: flex-start; }
.tabs span { height: 21px; line-height: 22px; text-align: center; border: solid #d4d4d4; border-width: 0 1px 1px 0; }
.tabs .sel { background: #fff; height: 24px; line-height: 26px; margin-top: -1px; }
.upper { padding-left: 2px; }
.upper span:nth-child(1) { width: 103px; border-left-width: 1px; }
.upper span:nth-child(2) { width: 60px; }
.upper span:nth-child(3) { width: 73px; }
.upper span:nth-child(4) { width: 120px; }
.upper span:nth-child(5) { width: 105px; }
.upper span:nth-child(6) { width: 129px; }
.status { height: 22px; line-height: 22px; padding-left: 1px; flex: none; }
.btn, .combo { background: #e1e1e1; border: 1px solid #adadad; display: flex; align-items: center; justify-content: center; gap: 5px; }
.combo { justify-content: space-between; padding: 0 5px 0 4px; height: 23px; }
.bigbuttons { display: grid; grid-template-columns: repeat(4, 143.500px); grid-template-rows: 51px 50px; gap: 2px 4.800px; padding-left: 2px; }
.homerow { display: flex; padding: 2px 1px 0 2px; align-items: flex-start; height: 31px; }
.btn.home { width: 141px; height: 28px; }
.btn.goto { width: 142px; height: 27px; margin-left: 7px; }
.homerow label { margin-left: auto; line-height: 28px; padding-right: 6px; }
.homerow .combo { width: 144px; margin-top: 1px; }
.green { color: #1c4a1c; }
.lower { display: flex; justify-content: space-between; height: 111px; padding-right: 1px; }
.opts { padding: 38px 0 0 1px; }
.opts div { display: flex; align-items: center; gap: 7px; height: 16px; margin-bottom: 6px; }
.opts div:nth-child(3) { margin-top: 13px; }
.dimtext { color: #888; }
.origin { width: 291px; }
.job { display: flex; justify-content: space-between; align-items: center; padding-right: 1px; }
.job label { width: 143px; text-align: right; }
.radios { width: 140px; height: 53px; border: 1px solid #dcdcdc; display: grid; grid-template-columns: 46px 45px 46px; grid-template-rows: repeat(3, 17px); }
.radios i { width: 16px; height: 16px; border: 1px solid #c4c4c4; border-radius: 50%; background: #fff; }
.radios .on { background: radial-gradient(#ccc 4.500px, #fff 5.500px); }
.show { height: 27px; margin-top: 2px; }
.settings { height: 27px; margin-top: 1px; }
.devrow { display: grid; grid-template-columns: 92px 243px 243px; gap: 6px; padding-left: 2px; align-items: center; margin-top: 1px; }
.devrow .btn { height: 27px; }
.bottomtabs { margin-top: auto; height: 23px; }
.bottomtabs .sel { width: 63px; }
.bottomtabs span { width: 66px; }

.palette { height: 32px; flex: none; display: flex; align-items: center; padding-left: 4px; }
.swatches { display: flex; align-items: center; margin-left: 5px; }
.sw { width: 26px; height: 28px; padding: 3px 2px; display: flex; }
.sw b { flex: 1; display: flex; align-items: center; justify-content: center; font: 11px "Liberation Sans", sans-serif; }
.sw.cur { background: #bcdcf4; border: 1px solid #8cc8f0; padding: 3px 1px 1px; }
.swsep { width: 1px; height: 24px; background: #ccc; margin: 0 3px; }
.statusbar { height: 26px; flex: none; display: grid; grid-template-columns: 158px 266px 216px; padding-left: 2px; line-height: 29px; }
.s3 { border-right: 1px solid #d0d0d0; }

.taskbar { height: 50px; flex: none; background: #1e1e1e; color: #fff; display: flex; align-items: stretch; position: relative; }
.task { width: 62.100px; padding: 0 5px; display: flex; align-items: center; justify-content: center; background: linear-gradient(#f49aa5, #f49aa5) center bottom / 0 3px no-repeat; }
.task:first-child { width: 61px; }
.task.run { background-size: 51px 3px; }
.task.multi { background-image: linear-gradient(90deg, #f49aa5 80%, #b87880 80%); }
.task.current { background-color: #4c4c4c; background-size: 62px 3px; }
.ai { width: 28px; height: 26px; border-radius: 5px; background: #330000; color: #ff9a00; font: bold 16px/26px "Open Sans", sans-serif; text-align: center; }
.tray { margin-left: auto; margin-right: 5px; border-right: 1px solid #777; display: grid; grid-template-columns: 41px 29px 28px 31px 30px 33px 53px 83px 52px; align-items: center; font: 14.500px "Open Sans", sans-serif; }
.lang { font-size: 14px; letter-spacing: -.3px; }
.clock { display: flex; flex-direction: column; align-items: center; line-height: 23px; font-size: 14px; letter-spacing: 0; margin-left: -22px; }
.notif { position: relative; margin-left: 5px; }
.notif b { position: absolute; left: 10px; top: 7px; width: 20px; height: 20px; border: 1px solid #888; border-radius: 50%; background: #2c2c2c; font: 600 13px/18px "Open Sans", sans-serif; text-align: center; }
```
FILE: app.js
```js
// Drawing canvas: grid, rulers, test card, selection handles.
const step = 54.54, x0 = 94.5, y0 = 170.3;
const out = [];
const snap = v => Math.floor(v) + 0.5;
for (let i = 0; i < 23; i++) {
  const x = snap(x0 + i * step);
  out.push(`<path d="M${x} 144V968" stroke="#dcdcdc"/>`);
}
for (let i = 0; i < 15; i++) {
  const y = snap(y0 + i * step);
  out.push(`<path d="M68 ${y}H1320" stroke="#dcdcdc"/>`);
}
const num = (v, cx, base) => {
  const w = String(v).length * 8.7;
  out.push(`<text x="${cx - w / 2}" y="${base}" textLength="${w}" lengthAdjust="spacingAndGlyphs">${v}</text>`);
};
for (let i = 0; i < 23; i++) {
  num(1000 - i * 10, x0 + i * step, 166);
  num(1000 - i * 10, x0 + i * step, 961);
}
for (let i = 0; i < 15; i++) {
  num(520 + i * 10, 85.5, y0 + i * step + 6.5);
  num(520 + i * 10, 1302.5, y0 + i * step + 6.5);
}
out.push('<rect x="265.500" y="278.500" width="899.500" height="654" rx="18" fill="none" stroke="#111" stroke-width="1.200"/>');
out.push('<circle cx="292.700" cy="308.500" r="13.800" fill="none" stroke="#111"/><circle cx="1137.700" cy="308.500" r="13.800" fill="none" stroke="#111"/>');
const label = (t, x, y, w, cls, extra = '') =>
  out.push(`<text class="outline ${cls}" x="${x}" y="${y}" textLength="${w}" lengthAdjust="spacingAndGlyphs" ${extra}>${t}</text>`);
label('Material: Cardboard', 342, 340, 291, 'big');
label('Thickness: 3 mm', 827, 340, 250, 'big');
label('Cutting', 475.5, 846.5, 108, 'big');
label('Engraving (fill)', 863.5, 846.5, 217, 'big');
label('POWER', 283.5, 388.2, 74, 'small');
label('SPEED', 0, 0, 66, 'small', 'transform="translate(303 581) rotate(-90)"');
[['10', 375.5], ['25', 448.5], ['50', 522.5], ['75', 596.5], ['100', 665.5],
 ['10', 809.5], ['25', 883.5], ['50', 957.5], ['75', 1031.5], ['100', 1100]].forEach(([t, x]) =>
  label(t, x, 389.5, t.length * 11, 'small'));
['10', '25', '40', '60', '80', '100'].forEach((t, i) => label(t, 343 - t.length * 11, 434 + i * 70, t.length * 11, 'small'));
['80', '100', '200', '300', '400', '500'].forEach((t, i) => label(t, 781 - t.length * 11, 434 + i * 70, t.length * 11, 'small'));

const boxes = (xs, colors) => colors.forEach((c, r) => xs.forEach((x, k) =>
  out.push(`<rect x="${x}" y="${397.3 + r * 70.9}" width="55" height="54.500" fill="none" stroke="${c}" stroke-width="1.200"${k === 1 ? ' stroke-dasharray="7 3"' : ''}/>`)));
boxes([359.5, 434.5, 509.5, 580.5, 651.7], ['#2c2cd0', '#e03030', '#34d034', '#d2d23c', '#f49a3c', '#38dcdc']);
boxes([794.5, 869.5, 944.5, 1015.5, 1086.5], ['#e038e0', '#bebebe', '#2020a0', '#a03030', '#30a030', '#a8a830']);

[428, 679, 929].forEach(x => [391, 601, 812].forEach(y =>
  out.push(`<rect x="${x - 4.5}" y="${y - 4.5}" width="9" height="9" fill="#989898"/>`)));
const arc = '<path d="M-10 4Q-11 -11 3 -12" fill="none" stroke="#808080" stroke-width="2"/><path d="M1 -15.500L7 -11L0 -9ZM-14 1L-8 7L-7 0Z" fill="#808080"/>';
[[428, 391, 1, 1], [929, 391, -1, 1], [428, 812, 1, -1], [929, 812, -1, -1]].forEach(([x, y, a, b]) =>
  out.push(`<g transform="translate(${x} ${y}) scale(${a} ${b})">${arc}</g>`));
document.getElementById('canvas').innerHTML = out.join('');

// Layer palette: label, colour, text colour.
const layers = [['00', '#000', 1], ['01', '#00f', 1], ['02', '#f00', 1], ['03', '#00e000', 0], ['04', '#d0d000', 0], ['05', '#ff8000', 0],
  ['06', '#00e0e0', 0], ['07', '#f0f', 1], ['08', '#b4b4b4', 0], ['09', '#0000a0', 1], ['10', '#a00000', 1], ['11', '#00a000', 1],
  ['12', '#a0a000', 0], ['13', '#c08000', 0], ['14', '#00a0ff', 1], ['15', '#a000a0', 1], ['16', '#808080', 0], ['17', '#7d87b9', 0],
  ['18', '#bb7784', 0], ['19', '#4a6fe3', 1], ['20', '#d33f6a', 1], ['21', '#8cd78c', 0], ['22', '#f0b98d', 0], ['23', '#f6c4e1', 0],
  ['24', '#fa9ed4', 0], ['25', '#500a78', 1], ['26', '#b45a00', 1], ['27', '#004754', 1], ['28', '#86fa88', 0], ['29', '#ffdb66', 0],
  ['T1', '#f36926', 0], ['T2', '#0c96d9', 1]];
document.getElementById('swatches').innerHTML = layers.map(([t, c, w]) =>
  `${t === 'T1' ? '<i class="swsep"></i>' : ''}<div class="sw${t === '12' ? ' cur' : ''}"><b style="background:${c};color:${w ? '#fff' : '#111'}">${t}</b></div>`).join('');
```
